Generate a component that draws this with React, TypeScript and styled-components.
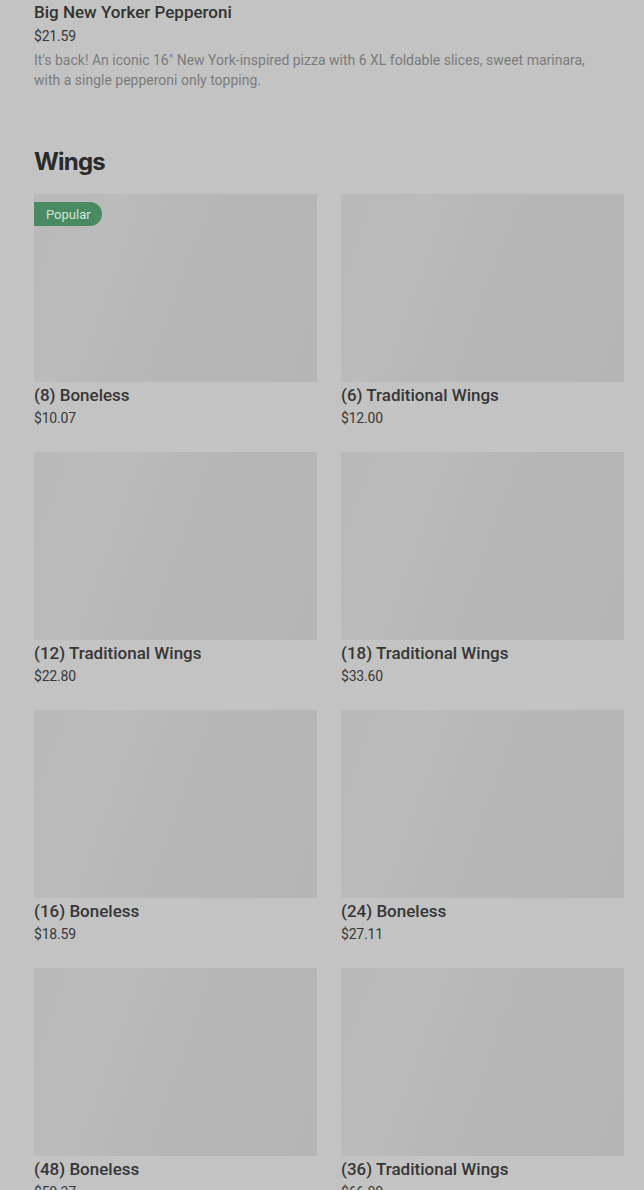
import React from "react";
import styled, { createGlobalStyle } from "styled-components";

const Global = createGlobalStyle`
  html, body { margin: 0; padding: 0; background: #c3c3c3; }
  body { font-family: Roboto, "Liberation Sans", Arial, sans-serif; color: #2e2e2e; }
`;

const Page = styled.div`
  padding: 0 20px 0 34px;
  overflow: hidden;
  height: 1190px;
`;

const TopItem = styled.div`
  display: flex;
  flex-direction: column;
`;

const ItemTitle = styled.div`
  font-size: 17px;
  font-weight: 500;
  line-height: 24px;
  color: #333;
`;

const Price = styled.div<{ $mt?: number }>`
  font-size: 14px;
  line-height: 20px;
  color: #383838;
  margin-top: ${(p) => p.$mt ?? 0}px;
  letter-spacing: -0.2px;
`;

const Desc = styled.p`
  margin: 4px 0 0;
  font-size: 14px;
  line-height: 20px;
  color: #7b7b7b;
  max-width: 570px;
`;

const SectionTitle = styled.h2`
  margin: 56px 0 0;
  font-family: Inter, Roboto, sans-serif;
  font-size: 24px;
  font-weight: 700;
  letter-spacing: -0.8px;
  line-height: 32px;
  color: #2a2a2a;
`;

const Grid = styled.div`
  display: grid;
  grid-template-columns: 283px 283px;
  column-gap: 24px;
  row-gap: 24px;
  margin-top: 16px;
`;

const Card = styled.div`
  display: flex;
  flex-direction: column;
`;

const ImageBox = styled.div`
  position: relative;
  height: 188px;
  background: linear-gradient(110deg, #b9b9b9 0%, #bbbbbb 25%, #b7b7b7 45%, #b5b5b5 100%);
`;

const Badge = styled.span`
  position: absolute;
  left: 0;
  top: 8px;
  height: 24px;
  padding: 0 11px 0 12px;
  display: flex;
  align-items: center;
  background: #4a8a63;
  color: #cfe6d6;
  font-size: 13px;
  border-radius: 0 12px 12px 0;
`;

const CardName = styled.div`
  margin-top: 3px;
  font-size: 17px;
  font-weight: 500;
  line-height: 20px;
  color: #363636;
`;

const items = [
  { name: "(8) Boneless", price: "$10.07", popular: true },
  { name: "(6) Traditional Wings", price: "$12.00" },
  { name: "(12) Traditional Wings", price: "$22.80" },
  { name: "(18) Traditional Wings", price: "$33.60" },
  { name: "(16) Boneless", price: "$18.59" },
  { name: "(24) Boneless", price: "$27.11" },
  { name: "(48) Boneless", price: "$50.37" },
  { name: "(36) Traditional Wings", price: "$66.00" },
];

export default function App() {
  return (
    <>
      <Global />
      <Page>
        <TopItem>
          <ItemTitle>Big New Yorker Pepperoni</ItemTitle>
          <Price $mt={2}>$21.59</Price>
          <Desc>
            It's back! An iconic 16" New York-inspired pizza with 6 XL foldable slices, sweet marinara,
            with a single pepperoni only topping.
          </Desc>
        </TopItem>
        <SectionTitle>Wings</SectionTitle>
        <Grid>
          {items.map((it) => (
            <Card key={it.name}>
              <ImageBox>{it.popular && <Badge>Popular</Badge>}</ImageBox>
              <CardName>{it.name}</CardName>
              <Price $mt={3}>{it.price}</Price>
            </Card>
          ))}
        </Grid>
      </Page>
    </>
  );
}
